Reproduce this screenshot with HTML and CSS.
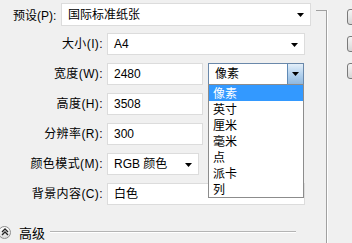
FILE: index.html
```html
<!DOCTYPE html>
<html lang="zh-CN">
<head>
    <meta charset="UTF-8">
    <title>新建</title>
    <link rel="stylesheet" href="styles.css">
</head>
<body>
    <div class="dialog">
        <div class="main">
            <div class="preset">
                <span class="preset-label">预设(P):</span>
                <div class="combo preset-combo">
                    <span>国际标准纸张</span>
                    <svg class="caret" width="7" height="4" viewBox="0 0 7 4"><polygon points="0,0 7,0 3.5,4" fill="#000"/></svg>
                </div>
            </div>

            <div class="form">
                <div class="row">
                    <span class="label">大小(I):</span>
                    <div class="combo wide">
                        <span>A4</span>
                        <svg class="caret" width="7" height="4" viewBox="0 0 7 4"><polygon points="0,0 7,0 3.5,4" fill="#000"/></svg>
                    </div>
                </div>
                <div class="row">
                    <span class="label">宽度(W):</span>
                    <div class="field">2480</div>
                    <div class="combo unit focused">
                        <span>像素</span>
                        <span class="drop-btn">
                            <svg width="7" height="4" viewBox="0 0 7 4"><polygon points="0,0 7,0 3.5,4" fill="#000"/></svg>
                        </span>
                        <ul class="list">
                            <li class="selected">像素</li>
                            <li>英寸</li>
                            <li>厘米</li>
                            <li>毫米</li>
                            <li>点</li>
                            <li>派卡</li>
                            <li>列</li>
                        </ul>
                    </div>
                </div>
                <div class="row">
                    <span class="label">高度(H):</span>
                    <div class="field">3508</div>
                    <!-- covered by the open list -->
                    <div class="combo unit"></div>
                </div>
                <div class="row">
                    <span class="label">分辨率(R):</span>
                    <div class="field">300</div>
                    <div class="combo unit"></div>
                </div>
                <div class="row">
                    <span class="label">颜色模式(M):</span>
                    <div class="combo mode">
                        <span>RGB 颜色</span>
                        <svg class="caret" width="7" height="4" viewBox="0 0 7 4"><polygon points="0,0 7,0 3.5,4" fill="#000"/></svg>
                    </div>
                    <div class="combo unit bits"></div>
                </div>
                <div class="row">
                    <span class="label">背景内容(C):</span>
                    <div class="combo wide"><span>白色</span></div>
                </div>
            </div>

            <div class="advanced">
                <span class="toggle">
                    <svg width="8" height="8" viewBox="0 0 8 8"><polyline points="1,4 4,1 7,4" fill="none" stroke="#222" stroke-width="1.3"/><polyline points="1,7 4,4 7,7" fill="none" stroke="#222" stroke-width="1.3"/></svg>
                </span>
                <span class="advanced-text">高级</span>
                <span class="rule"></span>
            </div>
        </div>

        <div class="group"></div>

        <div class="buttons">
            <span class="btn"></span>
            <span class="btn"></span>
            <span class="btn"></span>
        </div>
    </div>
</body>
</html>
```

FILE: styles.css
```css
body {
    margin: 0;
    background: #f0f0f0;
    font-family: "Liberation Sans", "Noto Sans CJK SC", sans-serif;
    font-size: 12px;
    color: #000;
}
.dialog {
    display: flex;
    width: 352px;
    height: 243px;
    overflow: hidden;
}
.main {
    width: 316px;
    flex-shrink: 0;
    padding-top: 3px;
}
.preset {
    display: flex;
    align-items: center;
    height: 23px;
    padding-left: 13px;
}
.preset-label {
    width: 48px;
}
.combo, .field {
    position: relative;
    display: flex;
    align-items: center;
    box-sizing: border-box;
    height: 22px;
    padding-left: 6px;
    background: #fff;
    border: 1px solid #dcdcdc;
    line-height: 20px;
    white-space: nowrap;
}
.preset-combo {
    width: 250px;
    height: 23px;
}
.caret {
    position: absolute;
    right: 6px;
    top: 9px;
}
.form {
    padding-top: 7px;
}
.row {
    display: flex;
    height: 22px;
    margin-bottom: 8px;
}
.label {
    width: 103px;
    text-align: right;
    line-height: 22px;
    letter-spacing: 0.4px;
}
.row > .field, .row > .combo {
    margin-left: 4px;
}
.wide {
    width: 198px;
}
.field {
    width: 96px;
}
.row > .unit {
    width: 96px;
    margin-left: 5px;
}
.row > .bits {
    margin-left: 9px;
}
.mode {
    width: 92px;
}
.focused {
    border-color: #6a88aa;
    z-index: 5;
}
.drop-btn {
    position: absolute;
    right: 0;
    top: 0;
    bottom: 0;
    width: 15px;
    display: flex;
    align-items: center;
    justify-content: center;
    border-left: 1px solid #5f8ab6;
    background: linear-gradient(#e4eff9, #b4d2ee 50%, #8fb8df);
}
.list {
    position: absolute;
    top: 100%;
    left: -1px;
    right: -1px;
    margin: 0;
    padding: 0;
    list-style: none;
    background: #fff;
    border: 1px solid #8c8c8c;
    font-family: "Noto Sans CJK SC", sans-serif;
}
.list li {
    height: 16px;
    line-height: 16px;
    padding-left: 4px;
}
.list .selected {
    background: #3399ff;
    color: #fff;
}
.advanced {
    display: flex;
    align-items: center;
    height: 14px;
    margin-top: 20px;
    margin-right: 20px;
}
.toggle {
    display: flex;
    align-items: center;
    justify-content: center;
    width: 11px;
    height: 11px;
    margin-left: -2px;
    border: 1px solid #8e8e8e;
    border-radius: 50%;
    background: linear-gradient(#ffffff, #dcdcdc);
}
.advanced-text {
    margin-left: 8px;
    font-size: 13px;
}
.rule {
    flex: 1;
    margin-left: 5px;
    border-top: 1px solid #b4b4b4;
    border-bottom: 1px solid #fff;
}
.group {
    width: 10px;
    flex-shrink: 0;
    margin-top: 10px;
    border-top: 1px solid #a0a0a0;
    border-right: 1px solid #a0a0a0;
    box-shadow: 1px 0 0 #fff;
}
.buttons {
    display: flex;
    flex-direction: column;
    gap: 11px;
    flex-shrink: 0;
    margin-left: 20px;
    padding-top: 9px;
}
.btn {
    display: block;
    box-sizing: border-box;
    width: 70px;
    height: 16px;
    border: 1px solid #7a7a7a;
    border-radius: 3px;
    background: linear-gradient(#f4f4f4, #e6e6e6 50%, #d6d6d6);
}
```
